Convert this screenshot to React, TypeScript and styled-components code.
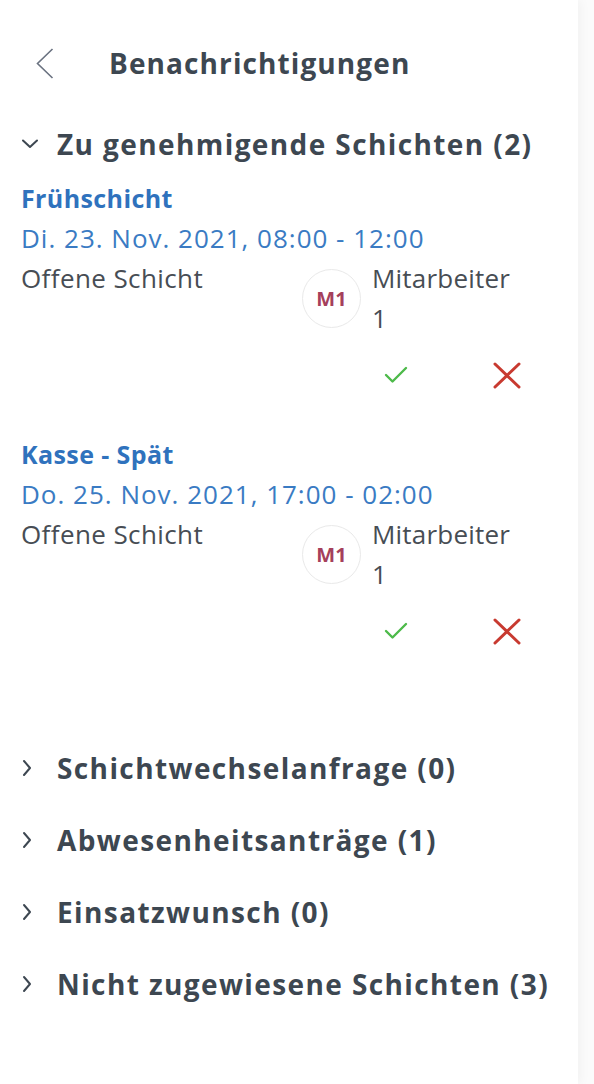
import styled, { createGlobalStyle } from 'styled-components';

const GlobalStyle = createGlobalStyle`
  html, body {
    margin: 0;
    padding: 0;
    background: #fbfbfb;
  }
  body {
    font-family: 'Open Sans', 'Noto Sans', sans-serif;
    color: #3d4751;
  }
`;

const Panel = styled.div`
  width: 578px;
  min-height: 1084px;
  background: #ffffff;
  box-shadow: 3px 0 10px rgba(0, 0, 0, 0.04);
  padding-top: 35px;
  box-sizing: border-box;
`;

const TopBar = styled.div`
  display: flex;
  align-items: center;
  height: 56px;
  padding-left: 36px;
`;

const BackButton = styled.button`
  background: none;
  border: none;
  padding: 0;
  width: 73px;
  height: 32px;
  display: flex;
  align-items: center;
  cursor: pointer;
`;

const PageTitle = styled.h1`
  margin: 0;
  font-size: 28px;
  font-weight: 700;
  letter-spacing: 1.1px;
  color: #3d4751;
`;

const Section = styled.section<{ $open?: boolean }>`
  margin-top: ${(p) => (p.$open ? '25px' : '0')};
  margin-bottom: 16px;
`;

const SectionHeader = styled.div`
  display: flex;
  align-items: center;
  height: 56px;
  padding-left: 22px;
  cursor: pointer;
`;

const ChevronBox = styled.span`
  width: 35px;
  display: flex;
  align-items: center;
`;

const SectionTitle = styled.h2`
  margin: 0;
  font-size: 28px;
  font-weight: 700;
  letter-spacing: 1.4px;
  color: #3d4751;
`;

const SectionBody = styled.div`
  padding: 6px 0 73px 21px;
  display: flex;
  flex-direction: column;
  gap: 39px;
`;

const Card = styled.div`
  display: flex;
  flex-direction: column;
`;

const ShiftName = styled.div`
  font-size: 25px;
  font-weight: 700;
  letter-spacing: 0.4px;
  line-height: 40px;
  color: #2f72bd;
`;

const ShiftDate = styled.div`
  font-size: 26px;
  letter-spacing: 1px;
  line-height: 40px;
  color: #3a7bc3;
`;

const InfoRow = styled.div`
  display: flex;
`;

const ShiftType = styled.div`
  width: 281px;
  font-size: 26px;
  letter-spacing: 0.4px;
  line-height: 40px;
  color: #474d54;
`;

const Assignee = styled.div`
  display: flex;
  align-items: center;
  gap: 11px;
`;

const Avatar = styled.div`
  width: 59px;
  height: 59px;
  border-radius: 50%;
  border: 1px solid #e9e9e9;
  box-sizing: border-box;
  display: flex;
  align-items: center;
  justify-content: center;
  font-size: 20px;
  font-weight: 700;
  color: #a5405b;
`;

const AssigneeName = styled.div`
  font-size: 26px;
  letter-spacing: 0.2px;
  line-height: 40px;
  color: #474d54;
`;

const Actions = styled.div`
  display: flex;
  margin-top: 17px;
  height: 40px;
  padding-left: 360px;
  gap: 81px;
`;

const IconButton = styled.button`
  background: none;
  border: none;
  padding: 0;
  width: 30px;
  height: 40px;
  display: flex;
  align-items: center;
  justify-content: center;
  cursor: pointer;
`;

const BackIcon = () => (
  <svg width="18" height="31" viewBox="0 0 18 31">
    <polyline points="16.5,1 1.5,15.5 16.5,30" fill="none" stroke="#6a7280" strokeWidth="1.6" />
  </svg>
);

const ChevronDown = () => (
  <svg width="16" height="10" viewBox="0 0 16 10">
    <polyline points="1,1.5 8,8 15,1.5" fill="none" stroke="#3d4751" strokeWidth="2" strokeLinecap="round" strokeLinejoin="round" />
  </svg>
);

const ChevronRight = () => (
  <svg width="10" height="18" viewBox="0 0 10 18">
    <polyline points="2,2 8,9 2,16" fill="none" stroke="#3d4751" strokeWidth="2" strokeLinecap="round" strokeLinejoin="round" />
  </svg>
);

const CheckIcon = () => (
  <svg width="24" height="18" viewBox="0 0 24 18">
    <polyline points="2,9 8.5,15.5 22,2" fill="none" stroke="#4dba4a" strokeWidth="2.4" strokeLinecap="round" strokeLinejoin="round" />
  </svg>
);

const CloseIcon = () => (
  <svg width="28" height="27" viewBox="0 0 28 27">
    <line x1="2" y1="2" x2="26" y2="25" stroke="#c83a30" strokeWidth="3" strokeLinecap="round" />
    <line x1="26" y1="2" x2="2" y2="25" stroke="#c83a30" strokeWidth="3" strokeLinecap="round" />
  </svg>
);

interface Shift {
  name: string;
  date: string;
  type: string;
  initials: string;
  employee: string;
}

const shifts: Shift[] = [
  {
    name: 'Frühschicht',
    date: 'Di. 23. Nov. 2021, 08:00 - 12:00',
    type: 'Offene Schicht',
    initials: 'M1',
    employee: 'Mitarbeiter',
  },
  {
    name: 'Kasse - Spät',
    date: 'Do. 25. Nov. 2021, 17:00 - 02:00',
    type: 'Offene Schicht',
    initials: 'M1',
    employee: 'Mitarbeiter',
  },
];

const collapsed = [
  'Schichtwechselanfrage (0)',
  'Abwesenheitsanträge (1)',
  'Einsatzwunsch (0)',
  'Nicht zugewiesene Schichten (3)',
];

const ShiftCard = ({ shift }: { shift: Shift }) => (
  <Card>
    <ShiftName>{shift.name}</ShiftName>
    <ShiftDate>{shift.date}</ShiftDate>
    <InfoRow>
      <ShiftType>{shift.type}</ShiftType>
      <Assignee>
        <Avatar>{shift.initials}</Avatar>
        <div>
          <AssigneeName>{shift.employee}</AssigneeName>
          <AssigneeName>1</AssigneeName>
        </div>
      </Assignee>
    </InfoRow>
    <Actions>
      <IconButton aria-label="Genehmigen">
        <CheckIcon />
      </IconButton>
      <IconButton aria-label="Ablehnen">
        <CloseIcon />
      </IconButton>
    </Actions>
  </Card>
);

const App = () => {
  return (
    <>
      <GlobalStyle />
      <Panel>
        <TopBar>
          <BackButton aria-label="Zurück">
            <BackIcon />
          </BackButton>
          <PageTitle>Benachrichtigungen</PageTitle>
        </TopBar>
        <Section $open>
          <SectionHeader>
            <ChevronBox>
              <ChevronDown />
            </ChevronBox>
            <SectionTitle>Zu genehmigende Schichten (2)</SectionTitle>
          </SectionHeader>
          <SectionBody>
            {shifts.map((s) => (
              <ShiftCard key={s.name} shift={s} />
            ))}
          </SectionBody>
        </Section>
        {collapsed.map((title) => (
          <Section key={title}>
            <SectionHeader>
              <ChevronBox>
                <ChevronRight />
              </ChevronBox>
              <SectionTitle>{title}</SectionTitle>
            </SectionHeader>
          </Section>
        ))}
      </Panel>
    </>
  );
};

export default App;
